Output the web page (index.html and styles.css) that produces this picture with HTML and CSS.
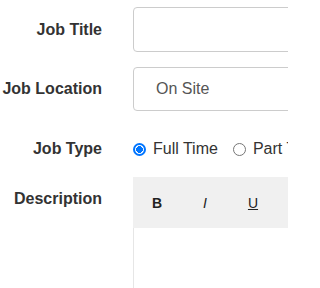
FILE: index.html
```html
<!DOCTYPE html>
<html>
<head>
<meta charset="utf-8">
<link rel="stylesheet" href="styles.css">
</head>
<body>
<form class="form">
  <div class="row row-title">
    <label class="label">Job Title</label>
    <div class="field"><input class="input" type="text"></div>
  </div>
  <div class="row row-loc">
    <label class="label">Job Location</label>
    <div class="field"><div class="input select">On Site</div></div>
  </div>
  <div class="row row-type">
    <label class="label">Job Type</label>
    <div class="field radios">
      <label class="radio"><span class="dot on"></span>Full Time</label>
      <label class="radio"><span class="dot"></span>Part Time</label>
    </div>
  </div>
  <div class="row row-desc">
    <label class="label label-top">Description</label>
    <div class="field editor">
      <div class="toolbar">
        <span class="btn b">B</span>
        <span class="btn i">I</span>
        <span class="btn u">U</span>
        <span class="btn">S</span>
      </div>
      <div class="area"></div>
    </div>
  </div>
</form>
</body>
</html>
```

FILE: styles.css
```css
html, body {
  margin: 0;
  padding: 0;
  background: #fff;
  overflow: hidden;
  width: 288px;
  height: 288px;
}
.form {
  font-family: "Liberation Sans", Arial, sans-serif;
  font-size: 16px;
  color: #333;
  width: 600px;
}
.row {
  display: flex;
  align-items: center;
  gap: 31px;
}
.row-title { margin-top: 7px; height: 45px; }
.row-loc { margin-top: 15px; height: 44px; }
.row-type { margin-top: 26px; height: 24px; }
.row-desc { margin-top: 16px; align-items: flex-start; }
.label {
  width: 102px;
  flex: none;
  text-align: right;
  font-weight: bold;
  white-space: nowrap;
  color: #333;
}
.label-top { padding-top: 13px; }
.field {
  width: 420px;
  flex: none;
  height: 100%;
}
.input {
  box-sizing: border-box;
  width: 100%;
  height: 100%;
  border: 1px solid #ccc;
  border-radius: 4px;
  background: #fff;
  font: inherit;
  color: #555;
  margin: 0;
  padding: 0 22px;
}
.select {
  display: flex;
  align-items: center;
}
.radios {
  display: flex;
  align-items: center;
  color: #333;
}
.radio {
  display: flex;
  align-items: center;
  margin-right: 15px;
}
.dot {
  box-sizing: border-box;
  width: 13px;
  height: 13px;
  border-radius: 50%;
  border: 1px solid #767676;
  margin-right: 7px;
}
.dot.on {
  border: 2px solid #0075ff;
  background: radial-gradient(circle, #0075ff 0 3.2px, #fff 3.6px);
}
.editor {
  height: 200px;
  border-left: 1px solid #e6e6e6;
  box-sizing: border-box;
}
.toolbar {
  display: flex;
  height: 51px;
  background: #f0f0f0;
  align-items: center;
  margin-left: -1px;
}
.btn {
  width: 48px;
  text-align: center;
  font-size: 14px;
  color: #222;
}
.b { font-weight: bold; }
.i { font-style: italic; }
.u { text-decoration: underline; }
.area { height: 150px; }
```
